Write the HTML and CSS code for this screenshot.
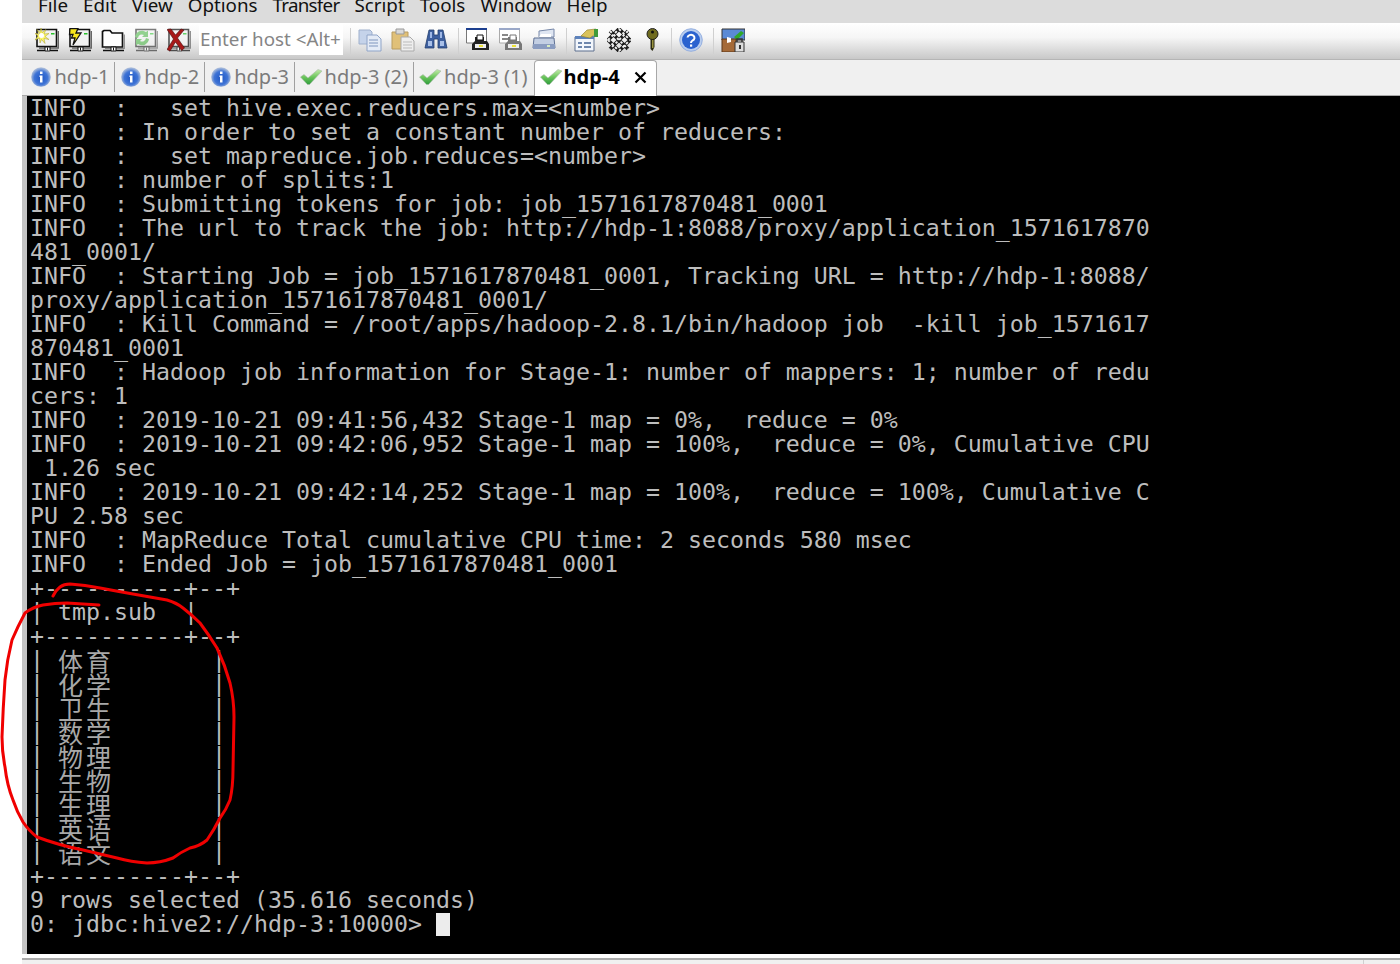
FILE: index.html
```html
<!DOCTYPE html>
<html lang="en">
<head>
<meta charset="utf-8">
<title>SecureCRT</title>
<link rel="stylesheet" href="styles.css">
</head>
<body>
<div class="app">
  <nav class="menubar">
    <span>File</span><span>Edit</span><span>View</span><span>Options</span><span class="narrow">Transfer</span><span>Script</span><span>Tools</span><span>Window</span><span>Help</span>
  </nav>
  <div class="toolbar">
    <svg class="ico" viewBox="0 0 24 24"><use href="#session"/><path d="M6 0l1.200 4.500L11 1.500 9 6l5-.5-4 3 4 3-5-1 1 5-3.500-4L5 15l-.5-5-4.500 2 3-4-3-2.500 4.500.5L2 1.500l3 3z" fill="#fbf56a" stroke="#a89f2a" stroke-width=".5"/><circle cx="6.500" cy="7.500" r="2.500" fill="#fff"/></svg>
    <svg class="ico" viewBox="0 0 24 24"><use href="#session"/><path d="M2 .5h8L8 5h5L5 17l2-7H3.500L5 6.500H1.500z" fill="#f7e51c" stroke="#111" stroke-width="1.300"/></svg>
    <svg class="ico" viewBox="0 0 24 24"><path d="M1.500 19V3.500L3 2.500h6l2 2.500h10.500v14z" fill="#fff" stroke="#111" stroke-width="1.700"/><path d="M23.300 6.500v14H4" fill="none" stroke="#8a8a8a" stroke-width="1.200"/><use href="#plug"/></svg>
    <svg class="ico dim" viewBox="0 0 24 24"><use href="#session"/><path d="M1 9a7 7 0 0 1 11-5l2-1.500V9H8l2-2a4 4 0 0 0-6 3zM15 11a7 7 0 0 1-11 5l-2 1.500V11h6l-2 2a4 4 0 0 0 6-3z" fill="#3fb23a"/></svg>
    <svg class="ico" viewBox="0 0 24 24"><g opacity=".7"><use href="#session"/></g><path d="M0 1.500l4-.5 4.500 6L14 1l3 1-6.500 8 7 10-3 2.500-6-8.500L3 23l-3-1.500L6.500 11z" fill="#a81818" stroke="#4a0d0d" stroke-width=".6"/></svg>
    <input class="host" type="text" placeholder="Enter host &lt;Alt+">
    <i class="sep"></i>
    <svg class="ico" viewBox="0 0 24 24"><path d="M1 2h11l2 2v12H1z" fill="#c5d3ea" stroke="#9fb0cc"/><path d="M9 7h10l4 4v12H9z" fill="#e4ebf6" stroke="#8fa4c8"/><path d="M11 12h9M11 15h9M11 18h9" stroke="#7f96be"/></svg>
    <svg class="ico" viewBox="0 0 24 24"><path d="M1 4h16v17H1z" fill="#e0c078" stroke="#b89c60"/><path d="M5 1h8v5H5z" fill="#d9d9d9" stroke="#999"/><path d="M10 9h9l4 4v10H10z" fill="#eee" stroke="#aaa"/><path d="M12 14h9M12 17h9M12 20h9" stroke="#bbb"/></svg>
    <svg class="ico" viewBox="0 0 24 24"><path d="M5 2h5v5h4V2h5l4 18h-9V11h-4v9H1z" fill="#3d5f9f" stroke="#24406f" stroke-width=".8"/><path d="M4 13h4v5H4zM16 13h4v5h-4z" fill="#a9c0e8"/><path d="M6 4h2v6H6zM16 4h2v6h-2z" fill="#9fb8e6"/></svg>
    <i class="sep"></i>
    <svg class="ico" viewBox="0 0 24 24"><path d="M.5 1h20v14H.5z" fill="#fff" stroke="#777"/><path d="M0 0h21v2H0z" fill="#1c3f8f"/><path d="M9 9h9v4h3l2 3v6H6v-6l3-3z" fill="#222"/><path d="M11 7h6v5h-6z" fill="#fff" stroke="#111"/><path d="M9 16h11v4H9z" fill="#eee"/><path d="M13 17h4v2h-4z" fill="#ece23a"/></svg>
    <svg class="ico" viewBox="0 0 24 24"><path d="M.5 1h20v14H.5z" fill="#fff" stroke="#aaa"/><path d="M0 0h21v2H0z" fill="#9aa8c8"/><path d="M3 6h6v2H3zM3 10h6v2H3z" fill="#888"/><path d="M9 9h9v4h3l2 3v6H6v-6l3-3z" fill="#777"/><path d="M11 7h6v5h-6z" fill="#fff" stroke="#777"/><path d="M9 16h11v4H9z" fill="#eee"/><path d="M13 17h4v2h-4z" fill="#ece23a"/></svg>
    <svg class="ico" viewBox="0 0 24 24"><path d="M7 3l15-2v8H7z" fill="#dfe6f2" stroke="#7687a8"/><path d="M2 10h20l1 10H1z" fill="#c3cfe3" stroke="#5f7093"/><path d="M7 9l2-3h10v3z" fill="#fff"/><path d="M1 16h22v5H1z" fill="#8a9cc0"/><path d="M15 17h3v2h-3z" fill="#d8ecc0"/></svg>
    <i class="sep"></i>
    <svg class="ico" viewBox="0 0 24 24"><path d="M1 9h19v14H1z" fill="#f2f6fc" stroke="#5d6f8d"/><path d="M1 8h19v3H1z" fill="#5d82bb"/><path d="M4 14h4v2H4zM10 14h7v2h-7zM4 18h4v2H4zM10 18h7v2h-7z" fill="#6d86ad"/><path d="M7 8l6-6 9-1 2 3-8 6-5-1z" fill="#d9c25a" stroke="#8d7a26" stroke-width=".6"/><path d="M20 1h4v8h-4z" fill="#3f9a3a"/></svg>
    <svg class="ico" viewBox="0 0 24 24"><path d="M3 3l18 18M21 3L3 21M1 12l11 11M12 1l11 11M1 12L12 1M12 23l11-11" stroke="#1a1a1a" stroke-width="3.600"/><path d="M3 3l18 18M21 3L3 21M1 12l11 11M12 1l11 11M1 12L12 1M12 23l11-11" stroke="#f0f0f0" stroke-width="2" stroke-dasharray="2.500 2.500"/></svg>
    <svg class="key" viewBox="0 0 13 24"><ellipse cx="6.500" cy="6" rx="5.500" ry="5.500" fill="#6f6b1f" stroke="#222"/><circle cx="6.500" cy="4" r="1.500" fill="#111"/><path d="M4.500 11h4v8l-2 4-2-2z" fill="#2b2a12"/><path d="M6 12h1.500v8H6z" fill="#9a9440"/></svg>
    <i class="sep"></i>
    <svg class="ico" viewBox="0 0 24 24"><circle cx="12" cy="12" r="11.300" fill="#b9cdee" stroke="#88a6dc" stroke-width=".8"/><circle cx="12" cy="12" r="9" fill="#2a62cf"/><path d="M8.500 9.500a3.500 3 0 1 1 5 3c-1.200.8-1.500 1.300-1.500 2.500" fill="none" stroke="#fff" stroke-width="2"/><path d="M11 16.500h2.200v2.200H11z" fill="#fff"/></svg>
    <i class="sep"></i>
    <svg class="ico" viewBox="0 0 24 24"><path d="M1 1h23v11H1z" fill="#5a8ad6" stroke="#333"/><path d="M13 9l7-6 3 2-7 7z" fill="#2fa82b"/><path d="M1 11h14v13H1z" fill="#a56a38" stroke="#5a3718"/><path d="M6 9l4 1v4l-4 1z" fill="#fff"/><path d="M14 14h9v10h-9z" fill="#ddd" stroke="#333"/><path d="M16 14v-3h5v3" fill="none" stroke="#333" stroke-width="1.500"/><path d="M18 17h2v4h-2z" fill="#333"/></svg>
  </div>
  <div class="tabbar">
    <div class="tab"><svg class="info" viewBox="0 0 20 20"><use href="#info"/></svg>hdp-1</div>
    <div class="tab"><svg class="info" viewBox="0 0 20 20"><use href="#info"/></svg>hdp-2</div>
    <div class="tab"><svg class="info" viewBox="0 0 20 20"><use href="#info"/></svg>hdp-3</div>
    <div class="tab done"><svg class="check" viewBox="0 0 22 16"><use href="#check"/></svg>hdp-3 (2)</div>
    <div class="tab done last"><svg class="check" viewBox="0 0 22 16"><use href="#check"/></svg>hdp-3 (1)</div>
    <div class="tab active"><svg class="check" viewBox="0 0 22 16"><use href="#check"/></svg>hdp-4<svg class="close" viewBox="0 0 13 13"><path d="M1.500 1.500l10 10M11.500 1.500l-10 10" stroke="#000" stroke-width="2.200"/></svg></div>
  </div>
  <pre class="terminal">INFO  :   set hive.exec.reducers.max=&lt;number&gt;
INFO  : In order to set a constant number of reducers:
INFO  :   set mapreduce.job.reduces=&lt;number&gt;
INFO  : number of splits:1
INFO  : Submitting tokens for job: job_1571617870481_0001
INFO  : The url to track the job: http://hdp-1:8088/proxy/application_1571617870
481_0001/
INFO  : Starting Job = job_1571617870481_0001, Tracking URL = http://hdp-1:8088/
proxy/application_1571617870481_0001/
INFO  : Kill Command = /root/apps/hadoop-2.8.1/bin/hadoop job  -kill job_1571617
870481_0001
INFO  : Hadoop job information for Stage-1: number of mappers: 1; number of redu
cers: 1
INFO  : 2019-10-21 09:41:56,432 Stage-1 map = 0%,  reduce = 0%
INFO  : 2019-10-21 09:42:06,952 Stage-1 map = 100%,  reduce = 0%, Cumulative CPU
 1.26 sec
INFO  : 2019-10-21 09:42:14,252 Stage-1 map = 100%,  reduce = 100%, Cumulative C
PU 2.58 sec
INFO  : MapReduce Total cumulative CPU time: 2 seconds 580 msec
INFO  : Ended Job = job_1571617870481_0001
+----------+--+
| tmp.sub  |
+----------+--+
| <span class="cjk">体育</span>       |
| <span class="cjk">化学</span>       |
| <span class="cjk">卫生</span>       |
| <span class="cjk">数学</span>       |
| <span class="cjk">物理</span>       |
| <span class="cjk">生物</span>       |
| <span class="cjk">生理</span>       |
| <span class="cjk">英语</span>       |
| <span class="cjk">语文</span>       |
+----------+--+
9 rows selected (35.616 seconds)
0: jdbc:hive2://hdp-3:10000&gt; <span class="cursor"></span></pre>
  <div class="statusbar"><i class="status-sep"></i></div>
</div>
<svg class="ink" viewBox="0 0 1400 964" aria-hidden="true"><path d="M53 596Q56 590 60 587Q64 584 70 584Q85 585 100 588Q116 591 133 594Q150 597 167 600Q177 603 183 608Q192 615 200 623Q209 635 217 648Q225 665 230 683Q234 700 234 717L233 770Q233 787 230 800Q226 810 220 818Q214 830 207 840Q200 846 190 848Q181 852 173 858Q160 863 147 863Q131 862 117 858Q100 854 83 850Q58 845 37 837Q29 831 23 822Q17 812 13 800Q7 785 5 767Q2 752 2 737Q3 708 5 680Q7 660 12 640Q18 626 25 613Q33 607 43 605Q55 603 67 603L99 605"/></svg>
<svg class="defs" aria-hidden="true">
  <defs>
    <radialGradient id="ig" cx=".5" cy=".55" r=".55"><stop offset="0" stop-color="#1e56c4"/><stop offset=".62" stop-color="#3f74d6"/><stop offset=".85" stop-color="#8ea9d8"/><stop offset="1" stop-color="#b9c6dc"/></radialGradient>
    <linearGradient id="cg" x1="0" y1="0" x2="0" y2="1"><stop offset="0" stop-color="#c4ecaa"/><stop offset=".5" stop-color="#6cc65c"/><stop offset="1" stop-color="#2f9c3c"/></linearGradient>
    <symbol id="plug" viewBox="0 0 24 24"><path d="M10 19h5v4h-5z" fill="#fff" stroke="#111"/><path d="M12.500 19.500v3" stroke="#111"/><path d="M2 22.500h8M15 22.500h8" stroke="#111" stroke-width="1.300"/></symbol>
    <symbol id="session" viewBox="0 0 24 24"><path d="M2 1.500h19.500V18.500H2z" fill="#f2f2f2" stroke="#111" stroke-width="1.600"/><path d="M23.300 3v17H4" fill="none" stroke="#666" stroke-width="1.400"/><path d="M16 5h3.500v1.500H16z" fill="#27c22a"/><path d="M10 19h5v4h-5z" fill="#fff" stroke="#111"/><path d="M12.500 19.500v3" stroke="#111"/><path d="M2 22.500h8M15 22.500h8" stroke="#111" stroke-width="1.300"/></symbol>
    <symbol id="info" viewBox="0 0 20 20"><circle cx="10" cy="10" r="9.800" fill="url(#ig)"/><path d="M9 4.500h2.500v2.500H9zM8.500 8.500h3V15.500H9V10h-.5z" fill="#fff"/></symbol>
    <symbol id="check" viewBox="0 0 22 16"><path d="M.5 8l3.500-2.500 4 3.500L18 .5 22 2 9.500 15.500H7.500z" fill="url(#cg)" stroke="#a8b8a8" stroke-width=".6"/></symbol>
  </defs>
</svg>
</body>
</html>
```
FILE: styles.css
```css
* { box-sizing: border-box; }
html, body { margin: 0; padding: 0; background: #fff; overflow: hidden; }
body { width: 1400px; height: 964px; position: relative; }

.app {
  margin-left: 22px;
  width: 1378px;
  height: 964px;
  display: flex;
  flex-direction: column;
  background: #f0f0f0;
  font-family: "Noto Sans", "Open Sans", sans-serif;
}

.menubar {
  height: 23px;
  flex: none;
  display: flex;
  align-items: flex-end;
  gap: 15px;
  padding: 0 0 0 16px;
  background: #dcdcdc;
  color: #111;
  font-size: 18.800px;
  line-height: 28px;
  overflow: hidden;
}
.menubar span { display: block; height: 28px; flex: none; margin-bottom: 4px; }
.menubar .narrow { letter-spacing: -.75px; }

.toolbar {
  height: 37px;
  flex: none;
  display: flex;
  align-items: flex-start;
  padding: 5px 0 0 13px;
  background: linear-gradient(#fff 0%, #f6f6f6 40%, #c8c8c8 100%);
  border-bottom: 1px solid #b5b5b5;
}
.ico { width: 24px; height: 24px; flex: none; margin-right: 9px; }
.ico.dim { opacity: .55; }
.key { width: 13px; height: 24px; flex: none; margin: 0 11px 0 6px; }
.host {
  width: 144px;
  height: 32px;
  flex: none;
  margin: -5px 6px 0 -1px;
  padding: 0 0 0 1px;
  border: 0;
  background: #fff;
  font: 18.800px "Noto Sans", sans-serif;
  outline: 0;
}
.host::placeholder { color: #858585; opacity: 1; }
.sep {
  display: block;
  width: 1px;
  height: 26px;
  flex: none;
  margin: 0 7px 0 1px;
  background: #d0d0d0;
}

.tabbar {
  height: 36px;
  flex: none;
  display: flex;
  align-items: flex-end;
  padding-left: 3px;
  background: #f0f0f0;
  border-bottom: 1px solid #a8a8a8;
  position: relative;
}
.tab {
  display: flex;
  align-items: center;
  height: 30px;
  margin-bottom: 3px;
  padding: 0 4.500px 0 6px;
  font-size: 20px;
  line-height: 30px;
  color: #7b7b7b;
  border-right: 1px solid #a0a0a0;
  white-space: nowrap;
}
.tab.done { padding: 0 5px 0 5px; }
.tab.last { border-right: 0; }
.tab .info { width: 20px; height: 20px; margin-right: 3.500px; flex: none; }
.tab .check { width: 22px; height: 16px; margin-right: 3px; flex: none; }
.tab.active {
  height: 36px;
  margin: 0 0 -1px 1px;
  padding: 0 9px 3px 5px;
  background: #fff;
  color: #000;
  font-weight: 700;
  border: 1px solid #a8a8a8;
  border-bottom: 0;
  border-radius: 4px 4px 0 0;
}
.tab.active .check { margin-right: 2px; }
.close { width: 13px; height: 13px; margin-left: 14px; flex: none; }

.terminal {
  margin: 0;
  height: 858px;
  flex: none;
  padding: 0 0 0 3px;
  background: #000;
  color: #bdbdbd;
  border-left: 5px solid #c4c4c4;
  font-family: "DejaVu Sans Mono", "Noto Sans CJK SC", monospace;
  font-size: 23.250px;
  line-height: 24px;
  overflow: hidden;
}
.cjk {
  font-family: "Noto Sans CJK SC", sans-serif;
  font-size: 25px;
  letter-spacing: 3px;
  line-height: 0;
  vertical-align: -3px;
  color: #a8a8a8;
}
.cursor {
  display: inline-block;
  width: 14px;
  height: 23px;
  background: #ececec;
  vertical-align: -4px;
}

.statusbar {
  flex: 1;
  display: flex;
  justify-content: flex-end;
  background: #f0f0f0;
  border-top: 4px solid #fff;
  box-shadow: inset 0 2px 0 #aaa;
  padding-top: 2px;
}
.status-sep { display: block; width: 1px; height: 100%; margin-right: 36px; background: #d0d0d0; }

.ink {
  position: absolute;
  left: 0;
  top: 0;
  width: 1400px;
  height: 964px;
  pointer-events: none;
  fill: none;
  stroke: #f00000;
  stroke-width: 3;
  stroke-linecap: round;
  stroke-linejoin: round;
}
.defs { position: absolute; width: 0; height: 0; }
```
